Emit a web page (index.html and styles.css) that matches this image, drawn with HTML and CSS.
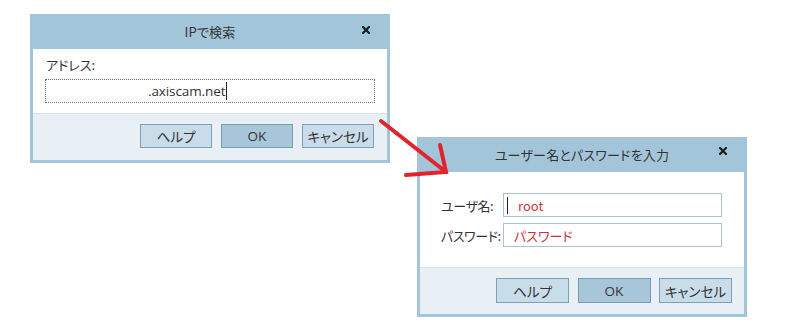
FILE: index.html
```html
<!DOCTYPE html>
<html lang="ja">
<head>
<meta charset="utf-8">
<link rel="stylesheet" href="styles.css">
</head>
<body>
<div class="canvas">
  <div class="dialog d1">
    <div class="titlebar">
      <span class="title">IPで検索</span>
      <svg class="close" width="8" height="8" viewBox="0 0 8 8"><path d="M1 1 L7 7 M7 1 L1 7" stroke="#1c1c1c" stroke-width="2.2" stroke-linecap="square"/></svg>
    </div>
    <div class="body b1">
      <div class="label">アドレス:</div>
      <div class="addr"><span class="addr-text">.axiscam.net</span><span class="caret"></span></div>
    </div>
    <div class="footer">
      <button class="btn">ヘルプ</button>
      <button class="btn ok">OK</button>
      <button class="btn">キャンセル</button>
    </div>
  </div>

  <div class="dialog d2">
    <div class="titlebar">
      <span class="title">ユーザー名とパスワードを入力</span>
      <svg class="close" width="8" height="8" viewBox="0 0 8 8"><path d="M1 1 L7 7 M7 1 L1 7" stroke="#1c1c1c" stroke-width="2.2" stroke-linecap="square"/></svg>
    </div>
    <div class="body b2">
      <div class="row">
        <span class="flabel">ユーザ名:</span>
        <div class="field"><span class="caret c2"></span><span class="val">root</span></div>
      </div>
      <div class="row">
        <span class="flabel">パスワード:</span>
        <div class="field pw"><span class="val">パスワード</span></div>
      </div>
    </div>
    <div class="footer f2">
      <button class="btn">ヘルプ</button>
      <button class="btn ok">OK</button>
      <button class="btn">キャンセル</button>
    </div>
  </div>

  <svg class="arrow" width="800" height="336" viewBox="0 0 800 336">
    <g stroke="#e3232b" stroke-width="4" stroke-linecap="round" fill="none">
      <path d="M381 121 L446 172"/>
      <path d="M440 145 L446 172 L406 175"/>
    </g>
  </svg>
</div>
</body>
</html>
```

FILE: styles.css
```css
html, body {
  margin: 0;
  padding: 0;
  background: #ffffff;
}
body {
  font-family: "Noto Sans CJK JP", "Noto Sans", sans-serif;
  font-feature-settings: "palt";
  color: #333333;
}
.canvas {
  position: relative;
  width: 800px;
  height: 336px;
  overflow: hidden;
}
.dialog {
  position: absolute;
  box-sizing: border-box;
  background: #a3c5da;
  padding: 0 3px 3px 3px;
  display: flex;
  flex-direction: column;
}
.d1 { left: 30px; top: 14px; width: 360px; }
.d2 { left: 417px; top: 137px; width: 330px; }

.titlebar {
  height: 35px;
  display: flex;
  align-items: center;
  justify-content: center;
  position: relative;
}
.title {
  font-size: 13px;
  color: #333;
  letter-spacing: 0.2px;
}
.close {
  position: absolute;
  right: 17px;
  top: 12px;
}
.d2 .close { top: 10px; }

.body {
  background: #ffffff;
  box-sizing: border-box;
}
.b1 {
  height: 64px;
  padding: 6px 12px 0 12px;
}
.label {
  font-size: 13px;
  line-height: 20px;
  padding-left: 1px;
  color: #333;
}
.addr {
  margin-top: 4px;
  height: 24px;
  box-sizing: border-box;
  border: 1px dotted #6b6b6b;
  display: flex;
  align-items: center;
  padding-left: 102px;
}
.addr-text {
  font-family: "Open Sans", "Noto Sans", sans-serif;
  font-size: 13.5px;
  color: #333;
  letter-spacing: -0.1px;
}
.caret {
  display: inline-block;
  width: 1px;
  height: 18px;
  background: #222;
  margin-left: 1px;
}

.b2 {
  height: 95px;
  padding: 21px 22px 0 21px;
  display: flex;
  flex-direction: column;
  gap: 6px;
}
.row {
  display: flex;
  align-items: center;
  justify-content: space-between;
}
.flabel {
  font-size: 13px;
  color: #333;
  white-space: nowrap;
  flex-shrink: 0;
  letter-spacing: -0.4px;
}
.field {
  width: 219px;
  flex-shrink: 0;
  height: 24px;
  box-sizing: border-box;
  border: 1px solid #aac2d1;
  display: flex;
  align-items: center;
  padding-left: 9px;
}
.field.pw { padding-left: 10px; }
.val {
  font-size: 13px;
  color: #c6353f;
  white-space: nowrap;
}
.caret.c2 {
  height: 17px;
  margin: 0 10px 0 -6px;
  background: #222;
}

.footer {
  height: 47px;
  background: #e9f0f5;
  border-top: 1px solid #d5e2ea;
  box-sizing: border-box;
  display: flex;
  justify-content: flex-end;
  align-items: flex-start;
  padding: 10px 13px 0 0;
  gap: 9px;
}
.f2 { padding-right: 12px; gap: 8.5px; }
.btn {
  width: 72px;
  height: 24px;
  margin: 0;
  box-sizing: border-box;
  border: 1px solid #7f9fb4;
  background: #c9dce9;
  font-family: "Noto Sans CJK JP", "Noto Sans", sans-serif;
  font-feature-settings: "palt";
  font-size: 13.5px;
  color: #333;
  padding: 0;
  display: flex;
  align-items: center;
  justify-content: center;
}
.f2 .btn { height: 25px; width: 73px; }
.btn.ok {
  background: #a8c6d9;
  border-color: #7a9cb2;
  font-family: "Open Sans", "Noto Sans", sans-serif;
}
.arrow {
  position: absolute;
  left: 0;
  top: 0;
  pointer-events: none;
}
```
